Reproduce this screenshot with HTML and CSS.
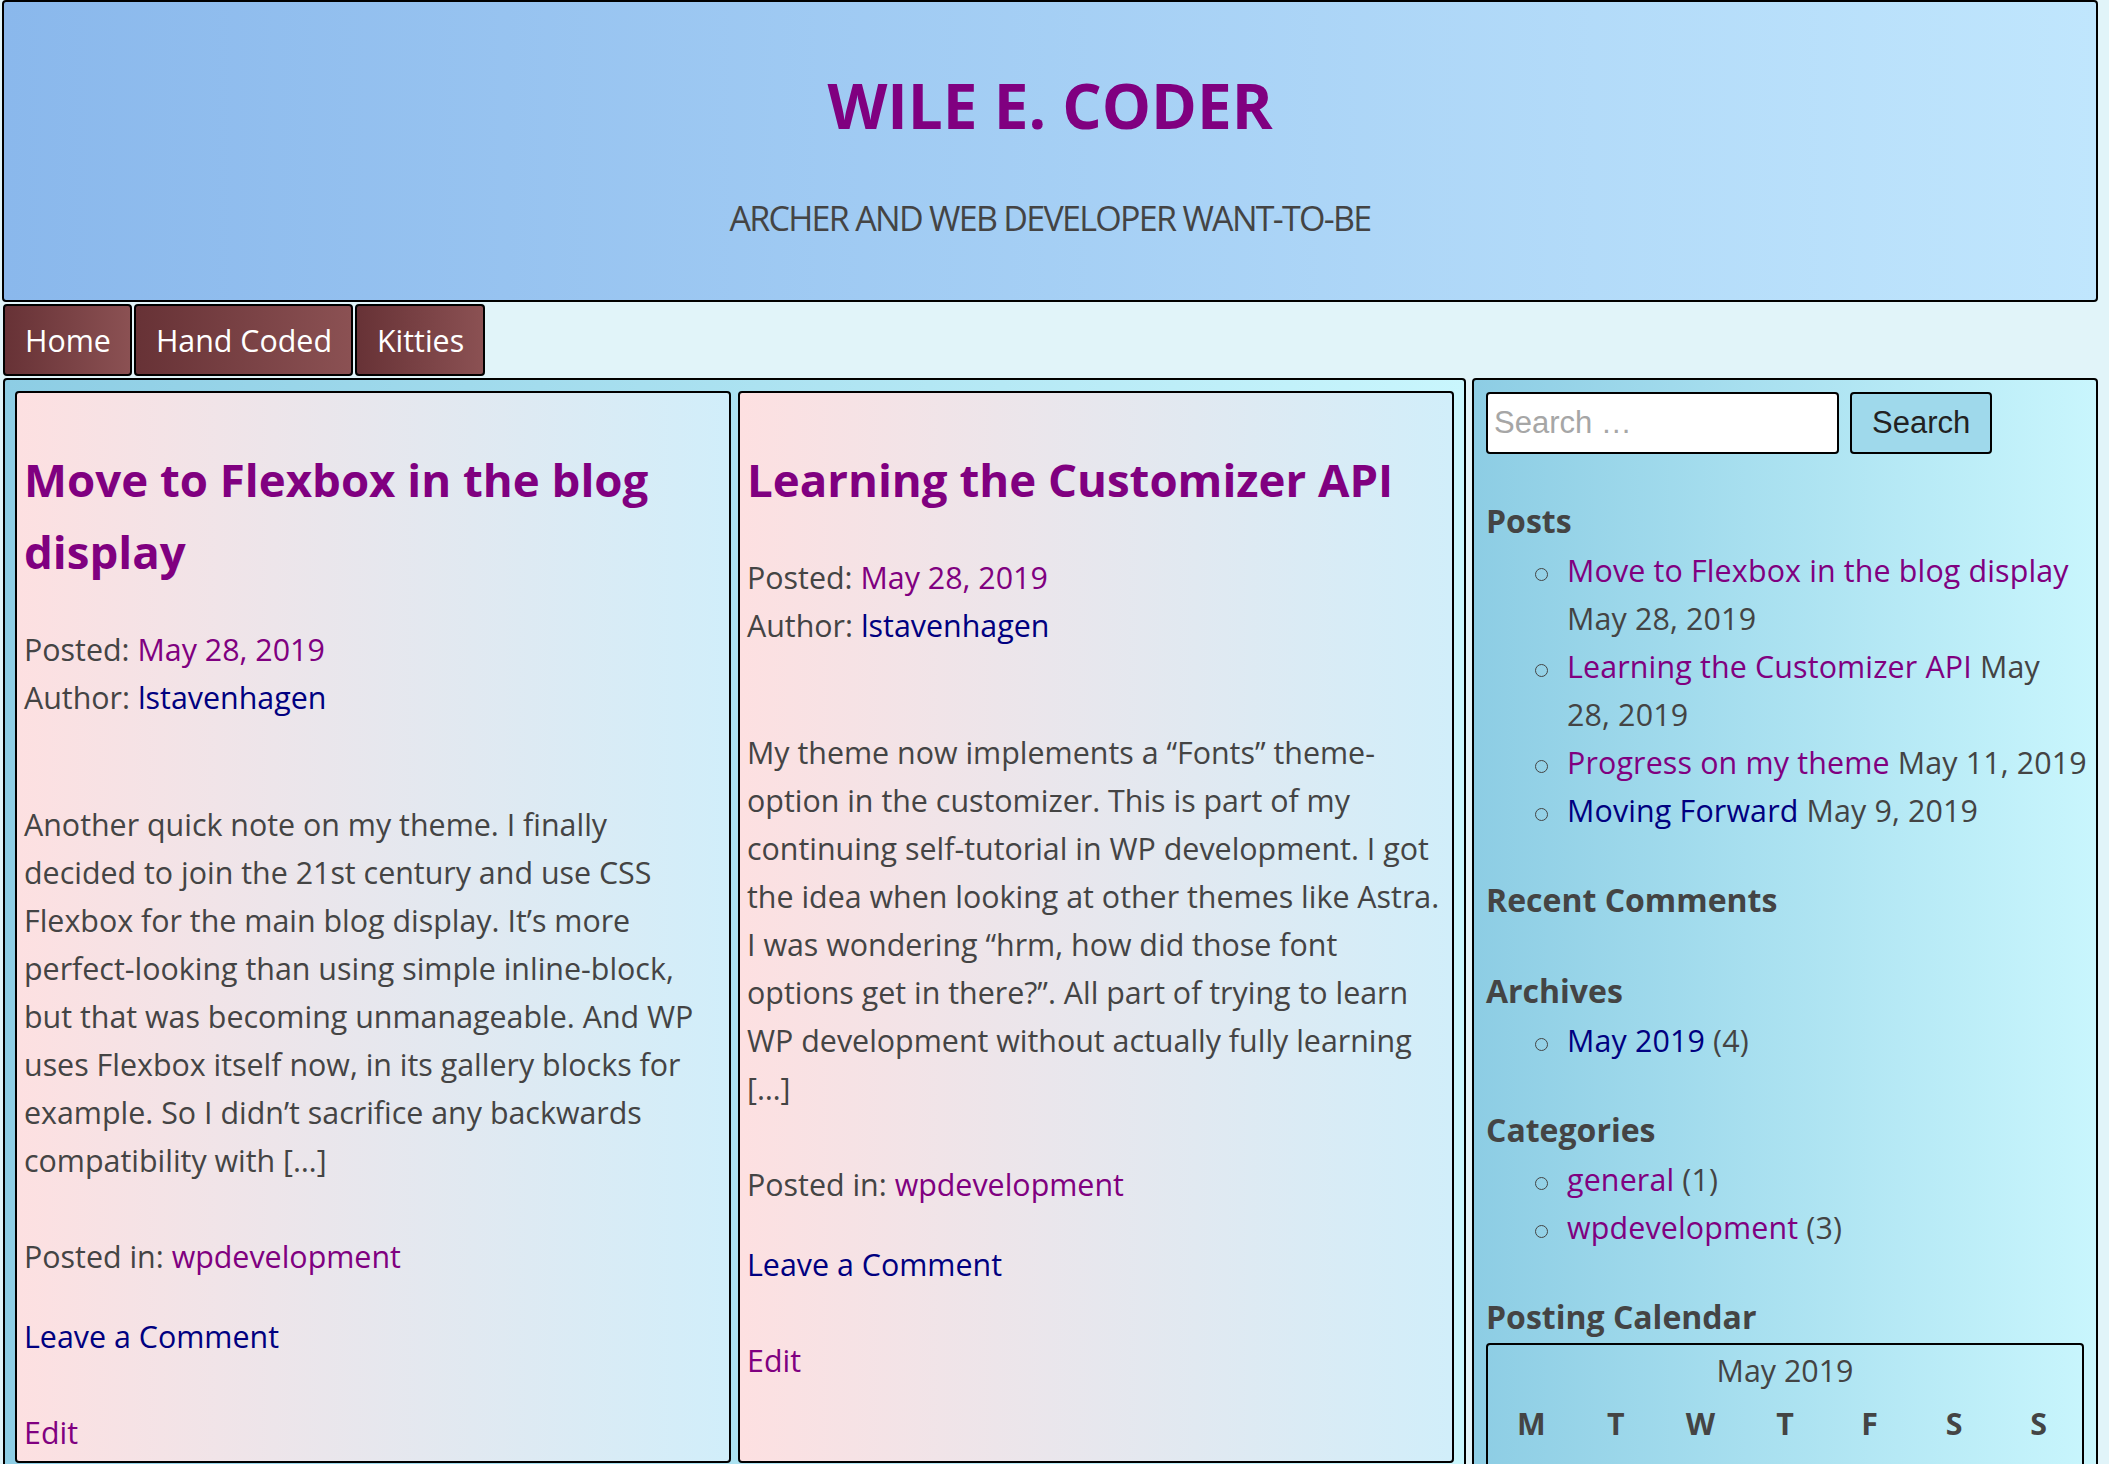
FILE: index.html
```html
<!DOCTYPE html>
<html lang="en">
<head>
<meta charset="utf-8">
<title>Wile E. Coder – Archer and web developer want-to-be</title>
<link rel="stylesheet" href="styles.css">
</head>
<body>
<div class="page">
  <header class="site-header">
    <h1 class="site-title">WILE E. CODER</h1>
    <p class="site-desc">ARCHER AND WEB DEVELOPER WANT-TO-BE</p>
  </header>

  <nav class="menu">
    <a href="#">Home</a>
    <a href="#">Hand Coded</a>
    <a href="#">Kitties</a>
  </nav>

  <div class="layout">
    <main class="posts">
      <article class="card">
        <h2 class="entry-title"><a class="visited" href="#">Move to Flexbox in the blog display</a></h2>
        <div class="entry-meta">
          <div>Posted: <a class="visited" href="#">May 28, 2019</a></div>
          <div>Author: <a class="fresh" href="#">lstavenhagen</a></div>
        </div>
        <p class="excerpt">Another quick note on my theme. I finally<br>decided to join the 21st century and use CSS<br>Flexbox for the main blog display. It’s more<br>perfect-looking than using simple inline-block,<br>but that was becoming unmanageable. And WP<br>uses Flexbox itself now, in its gallery blocks for<br>example. So I didn’t sacrifice any backwards<br>compatibility with […]</p>
        <p class="cats">Posted in: <a class="visited" href="#">wpdevelopment</a></p>
        <p class="comments"><a class="fresh" href="#">Leave a Comment</a></p>
        <p class="edit"><a class="visited" href="#">Edit</a></p>
      </article>

      <article class="card">
        <h2 class="entry-title"><a class="visited" href="#">Learning the Customizer API</a></h2>
        <div class="entry-meta">
          <div>Posted: <a class="visited" href="#">May 28, 2019</a></div>
          <div>Author: <a class="fresh" href="#">lstavenhagen</a></div>
        </div>
        <p class="excerpt">My theme now implements a “Fonts” theme-<br>option in the customizer. This is part of my<br>continuing self-tutorial in WP development. I got<br>the idea when looking at other themes like Astra.<br>I was wondering “hrm, how did those font<br>options get in there?”. All part of trying to learn<br>WP development without actually fully learning<br>[…]</p>
        <p class="cats">Posted in: <a class="visited" href="#">wpdevelopment</a></p>
        <p class="comments"><a class="fresh" href="#">Leave a Comment</a></p>
        <p class="edit"><a class="visited" href="#">Edit</a></p>
      </article>
    </main>

    <aside class="sidebar">
      <form class="search-form" action="#">
        <input class="search-field" type="search" placeholder="Search …">
        <button class="search-submit" type="button">Search</button>
      </form>

      <section class="widget">
        <h2 class="widget-title">Posts</h2>
        <ul class="widget-list">
          <li><a class="visited" href="#">Move to Flexbox in the blog display</a><br>May 28, 2019</li>
          <li><a class="visited" href="#">Learning the Customizer API</a> May<br>28, 2019</li>
          <li><a class="visited" href="#">Progress on my theme</a> May 11, 2019</li>
          <li><a class="fresh" href="#">Moving Forward</a> May 9, 2019</li>
        </ul>
      </section>

      <section class="widget">
        <h2 class="widget-title">Recent Comments</h2>
      </section>

      <section class="widget">
        <h2 class="widget-title">Archives</h2>
        <ul class="widget-list">
          <li><a class="fresh" href="#">May 2019</a> (4)</li>
        </ul>
      </section>

      <section class="widget">
        <h2 class="widget-title">Categories</h2>
        <ul class="widget-list">
          <li><a class="visited" href="#">general</a> (1)</li>
          <li><a class="visited" href="#">wpdevelopment</a> (3)</li>
        </ul>
      </section>

      <section class="widget">
        <h2 class="widget-title">Posting Calendar</h2>
        <div class="calendar">
          <table>
            <caption>May 2019</caption>
            <thead>
              <tr><th>M</th><th>T</th><th>W</th><th>T</th><th>F</th><th>S</th><th>S</th></tr>
            </thead>
            <tbody>
              <tr><td></td><td></td><td>1</td><td>2</td><td>3</td><td>4</td><td>5</td></tr>
              <tr><td>6</td><td>7</td><td>8</td><td>9</td><td>10</td><td>11</td><td>12</td></tr>
              <tr><td>13</td><td>14</td><td>15</td><td>16</td><td>17</td><td>18</td><td>19</td></tr>
              <tr><td>20</td><td>21</td><td>22</td><td>23</td><td>24</td><td>25</td><td>26</td></tr>
              <tr><td>27</td><td>28</td><td>29</td><td>30</td><td>31</td><td></td><td></td></tr>
            </tbody>
          </table>
        </div>
      </section>
    </aside>
  </div>
</div>
</body>
</html>
```

FILE: styles.css
```css
html, body {
  margin: 0;
  padding: 0;
}

body {
  height: 1464px;
  overflow: hidden;
  background: #e1f4f9;
  font-family: "Open Sans", "Noto Sans", sans-serif;
  font-size: 30.4px;
  line-height: 48px;
  color: #444;
}

a {
  text-decoration: none;
}

a.visited {
  color: #800080;
}

a.fresh {
  color: #000080;
}

.page {
  width: 2096px;
  margin-left: 2px;
}

/* ---------- header ---------- */
.site-header {
  border: 2px solid #000;
  border-radius: 4px;
  background: linear-gradient(to right, #8ab8ec, #c0e6fd);
  text-align: center;
  padding-bottom: 58px;
}

.site-title {
  margin: 63px 0 0;
  font-size: 62px;
  line-height: 80px;
  font-weight: 700;
  color: #800080;
}

.site-desc {
  margin: 49px 0 0;
  font-size: 34px;
  line-height: 48px;
  letter-spacing: -1.7px;
  color: #444;
}

/* ---------- menu ---------- */
.menu {
  display: flex;
  gap: 2px;
  margin-top: 2px;
  padding-left: 1px;
}

.menu a {
  color: #fff;
  border: 2px solid #000;
  border-radius: 4px;
  background: linear-gradient(to right, #673236, #8b5153);
  padding: 11px 19px 9px 20px;
}

/* ---------- layout ---------- */
.layout {
  display: flex;
  align-items: flex-start;
  gap: 6px;
  margin-top: 2px;
}

.posts {
  box-sizing: border-box;
  width: 1463px;
  margin-left: 1px;
  flex: none;
  display: flex;
  gap: 7px;
  border: 2px solid #000;
  border-radius: 4px;
  background: linear-gradient(to right, #8dcde4, #c9f6fd);
  padding: 11px 10px 10px;
}

.card {
  flex: 1 1 0;
  min-width: 0;
  border: 2px solid #000;
  border-radius: 4px;
  background: linear-gradient(to right, #fde0e1, #d1eefa);
  padding: 10px 9px 4px 7px;
}

.entry-title {
  margin: 40px 0 38px;
  font-size: 45.6px;
  line-height: 72px;
  font-weight: 700;
}

.entry-meta {
  padding-top: 1px;
  margin-bottom: -1px;
}

.excerpt,
.cats,
.comments,
.edit {
  margin: 0;
}

.excerpt {
  margin-top: 80px;
  white-space: nowrap;
}

.cats {
  margin-top: 48px;
}

.comments {
  margin-top: 32px;
}

.edit {
  margin-top: 48px;
}

/* ---------- sidebar ---------- */
.sidebar {
  flex: 1 1 0;
  min-width: 0;
  border: 2px solid #000;
  border-radius: 4px;
  background: linear-gradient(to right, #8dcde4, #c9f6fd);
  padding: 12px;
}

.search-form {
  display: flex;
  gap: 11px;
  margin: 0;
}

.search-field,
.search-submit {
  box-sizing: border-box;
  height: 62px;
  border: 2px solid #000;
  border-radius: 4px;
  font-family: "Liberation Sans", Arial, sans-serif;
  font-size: 31px;
}

.search-field {
  width: 353px;
  padding: 0 6px;
  background: #fff;
  color: #222;
}

.search-field::placeholder {
  color: #a6a6a6;
}

.search-submit {
  padding: 0 20px;
  background: #9fd9eb;
  color: #222;
}

.widget {
  margin-top: 43px;
}

.widget-list + * ,
.widget:has(.widget-list) + .widget {
  margin-top: 41px;
}

.widget-title {
  margin: 0;
  font-size: 32px;
  line-height: 48px;
  font-weight: 700;
  color: #444;
}

.widget-list {
  margin: 2px 0 0;
  padding-left: 81px;
  list-style: none;
  letter-spacing: 0.15px;
}

.widget-list li {
  position: relative;
  white-space: nowrap;
}

.widget-list li::before {
  content: "";
  position: absolute;
  left: -32px;
  top: 21px;
  width: 11px;
  height: 11px;
  border: 1.5px solid #444;
  border-radius: 50%;
}

.calendar {
  margin-top: 2px;
  border: 2px solid #000;
  border-radius: 4px;
}

.calendar table {
  width: 100%;
  border-collapse: separate;
  border-spacing: 2px;
  margin-top: 2px;
}

.calendar caption {
  line-height: 48px;
}

.calendar th {
  font-weight: 700;
  padding: 3px 0;
  text-align: center;
}

.calendar td {
  text-align: center;
  padding: 3px 0;
}
```
